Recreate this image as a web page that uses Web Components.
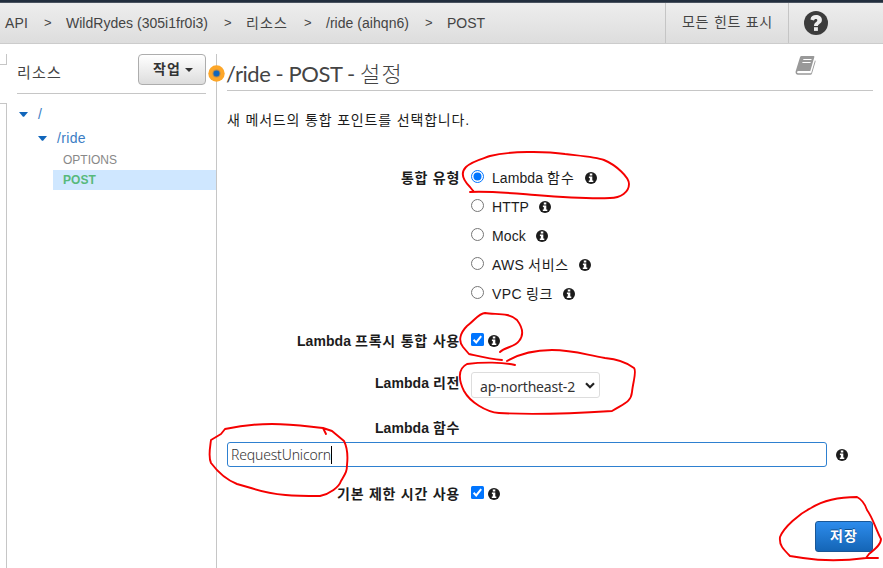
<!DOCTYPE html>
<html lang="ko">
<head>
<meta charset="utf-8">
<title>API Gateway</title>
<style>
html,body{margin:0;padding:0;overflow:hidden;background:#fff}
body{font-family:"Liberation Sans","Noto Sans CJK KR",sans-serif}
</style>
</head>
<body>
<api-console></api-console>
<script>
const define = (name, html, init) => {
  const t = document.createElement('template');
  t.innerHTML = html.trim();
  customElements.define(name, class extends HTMLElement {
    constructor() {
      super();
      this.attachShadow({mode: 'open'}).append(t.content.cloneNode(true));
    }
    connectedCallback() { if (init) init.call(this, this.shadowRoot); }
  });
};

/* Text run whose tracking is adjusted to fill the width in the "w" attribute. */
define('fit-text', `
<style>:host{display:inline-block;white-space:nowrap;flex:none}span{white-space:pre}</style><span><slot></slot></span>`,
function (root) {
  const w = +this.getAttribute('w'), span = root.querySelector('span');
  const n = this.textContent.length;
  this.style.letterSpacing = '0';
  const natural = span.getBoundingClientRect().width;
  this.style.letterSpacing = ((w - natural) / n) + 'px';
  this.style.width = w + 'px';
});

define('info-icon', `
<style>:host{display:block;flex:none;width:12px;height:12px}svg{display:block}</style>
<svg width="12" height="12" viewBox="0 0 12 12"><circle cx="6" cy="6" r="6" fill="#1c1c1c"/><path d="M4.800 1.500h2.500v1.900H4.800zM3.900 4.500h3.400v3.900h1v1.500H3.800V8.400h1V6h-.9z" fill="#fff"/></svg>`);

define('radio-mark', `
<style>:host{display:block;flex:none;width:13px;height:13px}svg{display:block}.on{display:none}:host([checked]) .on{display:block}:host([checked]) .ring{stroke:#0075ff}</style>
<svg width="13" height="13" viewBox="0 0 13 13"><circle class="ring" cx="6.5" cy="6.5" r="6" fill="#fff" stroke="#767676"/><circle class="on" cx="6.5" cy="6.5" r="4" fill="#0075ff"/></svg>`);

define('check-mark', `
<style>:host{display:block;flex:none;width:13px;height:13px}svg{display:block}</style>
<svg width="13" height="13" viewBox="0 0 13 13"><rect width="13" height="13" rx="1.5" fill="#0075ff"/><path d="M2.6 6.8l2.6 2.6 5-6.2" fill="none" stroke="#fff" stroke-width="2"/></svg>`);

define('top-bar', `
<style>
:host{display:flex;box-sizing:border-box;height:44px;border-top:2px solid #232f3e;border-bottom:1px solid #ccc;box-shadow:inset 0 1px #4a5360;background:linear-gradient(#eee,#ddd);color:#444;font-size:14px;line-height:38px}
nav{display:flex;flex:1;padding:2px 0 0 5px}
.g{width:7px;margin:0 15px 0 16px;font-size:13px}
.hint{box-sizing:border-box;width:124px;border:solid #c5c5c5;border-width:0 1px;padding:0 0 0 16px;margin-top:1px}
.help{width:94px;padding:9px 0 0 15px;box-sizing:border-box}
svg{display:block}
</style>
<nav><fit-text w="23">API</fit-text><span class="g">&gt;</span><fit-text w="142">WildRydes (305i1fr0i3)</fit-text><span class="g">&gt;</span><fit-text w="42">리소스</fit-text><span class="g">&gt;</span><fit-text w="83">/ride (aihqn6)</fit-text><span class="g">&gt;</span><fit-text w="38">POST</fit-text></nav>
<div class="hint"><fit-text w="91">모든 힌트 표시</fit-text></div>
<div class="help"><svg width="24" height="24" viewBox="0 0 24 24"><circle cx="12" cy="12" r="12" fill="#3c3c3c"/><path d="M6.400 8.400C7 5.200 9.100 4 12 4c3.200 0 5.900 1.800 5.900 4.900 0 3.700-4 3.900-4 6.100H10c0-3.700 3.300-3.800 3.300-5.700 0-.9-.6-1.400-1.500-1.400-1 0-1.500.6-2 1.700z" fill="#eee"/><path d="M10 16.200h3.900v3.700H10z" fill="#eee"/></svg></div>`);

define('side-rail', `
<style>:host{display:flex;flex-direction:column;width:7px;box-sizing:border-box;padding-top:10px}
.a,.b{box-sizing:border-box;border-right:1px solid #c6c6c6}
.a{height:11px;border-bottom:1px solid #c6c6c6}.b{margin-top:38px;flex:1;border-top:1px solid #c6c6c6}</style>
<div class="a"></div><div class="b"></div>`);

define('tree-item', `
<style>:host{display:flex;align-items:center;color:#3b7dc4;font-size:14px}
svg{flex:none;margin-right:10px}:host([leaf]) svg{display:none}</style>
<svg width="9" height="5" viewBox="0 0 9 5"><path d="M0 0h9L5.5 4.3q-1 1-2 0z" fill="#1166bb"/></svg><slot></slot>`);

define('resource-panel', `
<style>
:host{display:flex;flex-direction:column;box-sizing:border-box;width:210px;margin-top:10px;border-right:1px solid #c6c6c6;padding-left:10px;position:relative}
header{display:flex;justify-content:space-between;box-sizing:border-box;width:189px;height:40px;border-bottom:1px solid #c6c6c6;color:#444;font-size:15px;line-height:38px}
button{display:flex;align-items:center;gap:4px;box-sizing:border-box;width:68px;height:31px;margin:0;padding:0 0 3px 14px;border:1px solid #adadad;border-radius:4px;background:linear-gradient(#fff,#ddd);color:#333;font:bold 14px "Liberation Sans","Noto Sans CJK KR",sans-serif}
button svg{margin-top:3px}
.root{height:24px;margin:8px 0 0 2px}.ride{height:24px;margin:0 0 0 21px}
.leaf{height:20px;font-size:12px;color:#888;padding-left:10px;margin-left:36px}
.on{background:#cfe7ff;color:#57b97b;font-weight:bold}
.dot{position:absolute;right:-9px;top:11px}
</style>
<header><fit-text w="45">리소스</fit-text><button><fit-text w="28">작업</fit-text><svg width="8" height="4"><path d="M0 0h8L4 4z" fill="#333"/></svg></button></header>
<tree-item class="root">/</tree-item>
<tree-item class="ride"><fit-text w="29">/ride</fit-text></tree-item>
<tree-item leaf class="leaf"><fit-text w="54">OPTIONS</fit-text></tree-item>
<tree-item leaf class="leaf on"><fit-text w="33">POST</fit-text></tree-item>
<svg class="dot" width="17" height="17"><circle cx="8.5" cy="8.5" r="8.2" fill="#fda628"/><circle cx="8.5" cy="8.5" r="4" fill="#b58a52"/><circle cx="8.5" cy="8.5" r="3" fill="#1166bb"/></svg>`);

define('form-row', `
<style>:host{display:grid;grid-template-columns:233px 1fr;column-gap:11px;align-items:center;font-size:14px;color:#1c1c1c}
.l{display:flex;justify-content:flex-end;font-weight:bold;padding-top:1px}.c{display:flex;align-items:center}</style>
<div class="l"><slot name="label"></slot></div><div class="c"><slot></slot></div>`);

define('select-box', `
<style>:host{display:flex;box-sizing:border-box;align-items:center;width:129px;height:26px;border:1px solid #ddd;border-radius:3px;background:#fff;padding:4px 4px 0 8px;justify-content:space-between;font:14px "Noto Sans",sans-serif;line-height:20px;color:#333}
svg{margin-top:-4px}</style>
<slot></slot><svg width="10" height="7" viewBox="0 0 10 7"><path d="M1 1.2l4 4 4-4" fill="none" stroke="#222" stroke-width="2.2"/></svg>`);

define('method-setup', `
<style>
:host{display:block;flex:1;padding:10px 10px 0;min-width:0;color:#1c1c1c}
header{display:flex;justify-content:space-between;box-sizing:border-box;height:37px;border-bottom:1px solid #c6c6c6;color:#444;font:22px/40px Lato,"Noto Sans CJK KR",sans-serif}
h1{font:inherit;margin:0 0 0 -1px;display:flex}.ko{font-weight:300}
.book{display:block;margin:1px 57px 0 0}
p{margin:19px 0 0;font-size:14px;line-height:20px;height:52px}
form-row{height:29px}
.t{margin:3px 17px 0 8px;display:flex;gap:4px;line-height:18px}
.t + info-icon{margin:3px 0 0 -7px}
.proxy{margin-top:18px}.region{margin-top:12px}.region select-box{margin-top:6px}.region .lab{margin-bottom:2px}
.func{margin-top:17px}
.line{display:flex;align-items:center;gap:9px;margin-top:1px}
.input{box-sizing:border-box;width:600px;height:25px;border:1px solid #2e80d0;border-radius:3px;padding:0 3px;display:flex;align-items:center;font:300 14px "Noto Sans",sans-serif;color:#333}
.caret{width:1px;height:18px;background:#000}
.time{margin-top:11px}
.save{display:block;box-sizing:border-box;margin:14px 0 0 auto;width:58px;height:31px;padding:0 0 3px;border:1px solid #1a5796;border-radius:3px;background:linear-gradient(#2d8cec,#1465b6);color:#fff;font:bold 14px "Noto Sans CJK KR",sans-serif;text-shadow:0 -1px #0f4d8c}
.lab{display:flex;gap:4px;align-items:baseline}
</style>
<header><h1><fit-text w="134">/ride - POST - </fit-text><fit-text class="ko" w="43">설정</fit-text></h1>
<svg class="book" width="21" height="21" viewBox="0 0 21 21"><path d="M6.500 1H18.500q1.200.1.8 1.300L15.300 16H3.500Q2 16 2 17.200q.1 1 1.300 1H16.200L20 5.300q.8.500.5 1.500l-3.500 11.700q-.4 1.300-1.700 1.300H3Q.2 19.500.6 16.500L5 2.200Q5.400 1 6.500 1z" fill="#999"/><path d="M8.300 4.500h8.200M7.400 7.500h8.200" stroke="#fff" stroke-width="1.200"/></svg></header>
<p><fit-text w="243">새 메서드의 통합 포인트를 선택합니다.</fit-text></p>
<form-row><fit-text slot="label" w="59">통합 유형</fit-text><radio-mark checked></radio-mark><span class="t"><fit-text w="51">Lambda</fit-text><fit-text w="28">함수</fit-text></span><info-icon></info-icon></form-row>
<form-row><radio-mark></radio-mark><span class="t"><fit-text w="37">HTTP</fit-text></span><info-icon></info-icon></form-row>
<form-row><radio-mark></radio-mark><span class="t"><fit-text w="34">Mock</fit-text></span><info-icon></info-icon></form-row>
<form-row><radio-mark></radio-mark><span class="t"><fit-text w="32">AWS</fit-text><fit-text w="41">서비스</fit-text></span><info-icon></info-icon></form-row>
<form-row><radio-mark></radio-mark><span class="t"><fit-text w="30">VPC</fit-text><fit-text w="27">링크</fit-text></span><info-icon></info-icon></form-row>
<form-row class="proxy"><span class="lab" slot="label"><fit-text w="54">Lambda</fit-text><fit-text w="105">프록시 통합 사용</fit-text></span><check-mark></check-mark><info-icon style="margin:3px 0 0 4px"></info-icon></form-row>
<form-row class="region"><span class="lab" slot="label"><fit-text w="54">Lambda</fit-text><fit-text w="27">리전</fit-text></span><select-box><fit-text w="95">ap-northeast-2</fit-text></select-box></form-row>
<form-row class="func"><span class="lab" slot="label"><fit-text w="54">Lambda</fit-text><fit-text w="27">함수</fit-text></span></form-row>
<div class="line"><div class="input"><fit-text w="100">RequestUnicorn</fit-text><span class="caret"></span></div><info-icon></info-icon></div>
<form-row class="time"><fit-text slot="label" w="123">기본 제한 시간 사용</fit-text><check-mark></check-mark><info-icon style="margin:3px 0 0 4px"></info-icon></form-row>
<button class="save"><fit-text w="28">저장</fit-text></button>`);

/* Freehand red marker strokes laid over the page. */
define('marker-layer', `
<style>:host{position:absolute;left:0;top:0;pointer-events:none}svg{display:block}</style>
<svg width="883" height="568" fill="none" stroke="#f50000" stroke-width="1.900" stroke-linejoin="round" stroke-linecap="round">
<path d="M474 192L470 187C462 179 461 172 466 167C472 161 482 159 490 156C510 151 545 151 565 154C582 156 596 157 604 160C616 165 629 177 629 184C629 192 621 198 610 198C590 199 560 197 535 195C510 193 490 191 470 192"/>
<path d="M500 352C505 347 515 347 519 341C524 335 523 328 517 320C509 312 495 315 485 313C479 313 474 321 467 326C460 333 458 341 463 347L469 354C478 356 489 359 502 360"/>
<path d="M515 365C503 362 482 362 467 364C457 369 459 381 464 391C470 402 486 412 499 413C535 415 580 413 612 411C625 403 631 402 632 392C633 382 637 371 634 368C625 361 616 359 605 358C586 355 574 350 552 350C532 350 519 354 507 361"/>
<path d="M326 434L323 428C304 426 292 424 272 424C254 424 239 426 225 429L221 434L211 440C210 448 208 457 211 463C217 471 227 480 237 484L251 488C275 496 296 496 320 496C330 494 339 487 341 481C345 474 347 472 347 465C348 456 347 447 344 441L332 431L323 428"/>
<path d="M878 558H866C844 561 822 561 803 558L790 556C783 549 779 545 780 537C784 527 799 514 811 508C824 500 840 497 857 497C861 499 865 504 867 510C873 518 876 530 881 539C881 545 874 550 869 554L866 558"/>
</svg>`);

define('api-console', `
<style>:host{display:flex;flex-direction:column;width:883px;height:568px;overflow:hidden;position:relative;background:#fff}
main{display:flex;flex:1;min-height:0}</style>
<top-bar></top-bar>
<main><side-rail></side-rail><resource-panel></resource-panel><method-setup></method-setup></main>
<marker-layer></marker-layer>`);
</script>
</body>
</html>
